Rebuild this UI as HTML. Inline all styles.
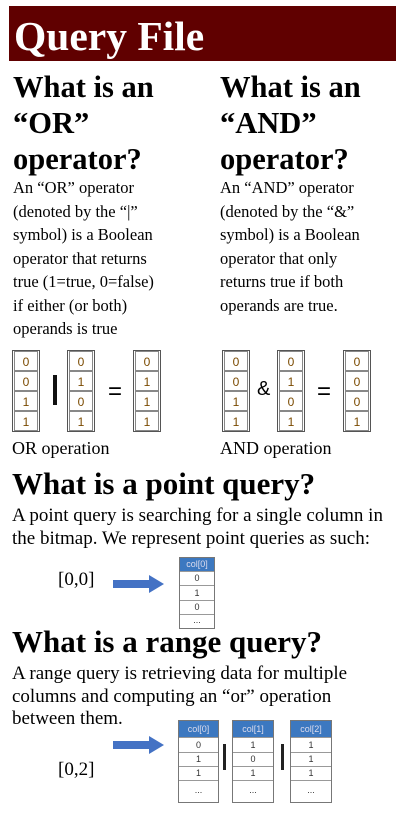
<!DOCTYPE html>
<html><head><meta charset="utf-8"><style>
body{margin:0;width:403px;height:813px;background:#fff;position:relative;overflow:hidden;font-family:"Liberation Serif",serif;color:#000}
.a{position:absolute;white-space:nowrap}
.h{font-weight:bold;font-size:30.5px}
.b{font-size:16.5px}
.w{font-size:19px}
.bar{position:absolute;left:9px;top:6px;width:387px;height:55px;background:#600000}
.col{position:absolute;border:1px solid #555;width:26px;font-family:"Liberation Sans",sans-serif;font-size:12px;color:#7a4a00}
.col div{height:20px;line-height:20px;text-align:center;border:1px solid #888;margin:0 1px;box-sizing:border-box}
.tb{position:absolute;border:1px solid #777;font-family:"Liberation Sans",sans-serif;font-size:9px;color:#333}
.tb div{border-bottom:1px solid #999;text-align:center;box-sizing:border-box}
.tb .hd{background:#3c78c0;color:#dde;}
</style></head><body>
<div class="bar"></div>
<div class="a" style="left:14px;top:12px;font-size:41.5px;font-weight:bold;color:#fff">Query File</div>

<div class="a h" style="left:13px;top:70px">What is an</div>
<div class="a h" style="left:13px;top:106px">“OR”</div>
<div class="a h" style="left:13px;top:142px">operator?</div>
<div class="a h" style="left:220px;top:70px">What is an</div>
<div class="a h" style="left:220px;top:106px">“AND”</div>
<div class="a h" style="left:220px;top:142px">operator?</div>

<div class="a b" style="left:13px;top:176px;line-height:23.5px">An “OR” operator<br>(denoted by the “|”<br>symbol) is a Boolean<br>operator that returns<br>true (1=true, 0=false)<br>if either (or both)<br>operands is true</div>
<div class="a b" style="left:220px;top:176px;line-height:23.5px">An “AND” operator<br>(denoted by the “&amp;”<br>symbol) is a Boolean<br>operator that only<br>returns true if both<br>operands are true.</div>

<div class="col" style="left:12px;top:350px"><div>0</div><div>0</div><div>1</div><div>1</div></div>
<div class="a" style="left:53px;top:375px;width:4px;height:30px;background:#111"></div>
<div class="col" style="left:67px;top:350px"><div>0</div><div>1</div><div>0</div><div>1</div></div>
<div class="a" style="left:108px;top:378px;font-size:24px;font-family:'Liberation Sans',sans-serif">=</div>
<div class="col" style="left:133px;top:350px"><div>0</div><div>1</div><div>1</div><div>1</div></div>
<div class="a" style="left:12px;top:438px;font-size:18px">OR operation</div>

<div class="col" style="left:222px;top:350px"><div>0</div><div>0</div><div>1</div><div>1</div></div>
<div class="a" style="left:257px;top:378px;font-size:20px;font-family:'Liberation Sans',sans-serif">&amp;</div>
<div class="col" style="left:277px;top:350px"><div>0</div><div>1</div><div>0</div><div>1</div></div>
<div class="a" style="left:317px;top:378px;font-size:24px;font-family:'Liberation Sans',sans-serif">=</div>
<div class="col" style="left:343px;top:350px"><div>0</div><div>0</div><div>0</div><div>1</div></div>
<div class="a" style="left:220px;top:438px;font-size:18px">AND operation</div>

<div class="a h" style="left:12px;top:466px;font-size:31px">What is a point query?</div>
<div class="a w" style="left:12px;top:504px;line-height:23px">A point query is searching for a single column in<br>the bitmap. We represent point queries as such:</div>
<div class="a" style="left:58px;top:569px;font-size:19px">[0,0]</div>
<svg class="a" style="left:112px;top:574px" width="54" height="20"><path d="M1 6H37V1L52 10L37 19V14H1Z" fill="#4472c4"/></svg>
<div class="tb" style="left:179px;top:557px;width:34px">
<div class="hd" style="height:14px;line-height:13px">col[0]</div><div style="height:14px;line-height:13px">0</div><div style="height:15px;line-height:14px">1</div><div style="height:14px;line-height:13px">0</div><div style="height:13px;line-height:10px;border:0">...</div></div>

<div class="a h" style="left:12px;top:624px;font-size:31px">What is a range query?</div>
<div class="a w" style="left:12px;top:663px;line-height:22.5px">A range query is retrieving data for multiple<br>columns and computing an “or” operation<br>between them.</div>
<div class="a" style="left:58px;top:759px;font-size:19px">[0,2]</div>
<svg class="a" style="left:112px;top:735px" width="54" height="20"><path d="M1 6H37V1L52 10L37 19V14H1Z" fill="#4472c4"/></svg>
<div class="tb" style="left:178px;top:720px;width:39px">
<div class="hd" style="height:17px;line-height:16px">col[0]</div><div style="height:15px;line-height:14px">0</div><div style="height:14px;line-height:13px">1</div><div style="height:14px;line-height:13px">1</div><div style="height:21px;line-height:18px;border:0">...</div></div>
<div class="a" style="left:223px;top:744px;width:3px;height:26px;background:#222"></div>
<div class="tb" style="left:232px;top:720px;width:40px">
<div class="hd" style="height:17px;line-height:16px">col[1]</div><div style="height:15px;line-height:14px">1</div><div style="height:14px;line-height:13px">0</div><div style="height:14px;line-height:13px">1</div><div style="height:21px;line-height:18px;border:0">...</div></div>
<div class="a" style="left:281px;top:744px;width:3px;height:26px;background:#222"></div>
<div class="tb" style="left:290px;top:720px;width:40px">
<div class="hd" style="height:17px;line-height:16px">col[2]</div><div style="height:15px;line-height:14px">1</div><div style="height:14px;line-height:13px">1</div><div style="height:14px;line-height:13px">1</div><div style="height:21px;line-height:18px;border:0">...</div></div>
</body></html>
